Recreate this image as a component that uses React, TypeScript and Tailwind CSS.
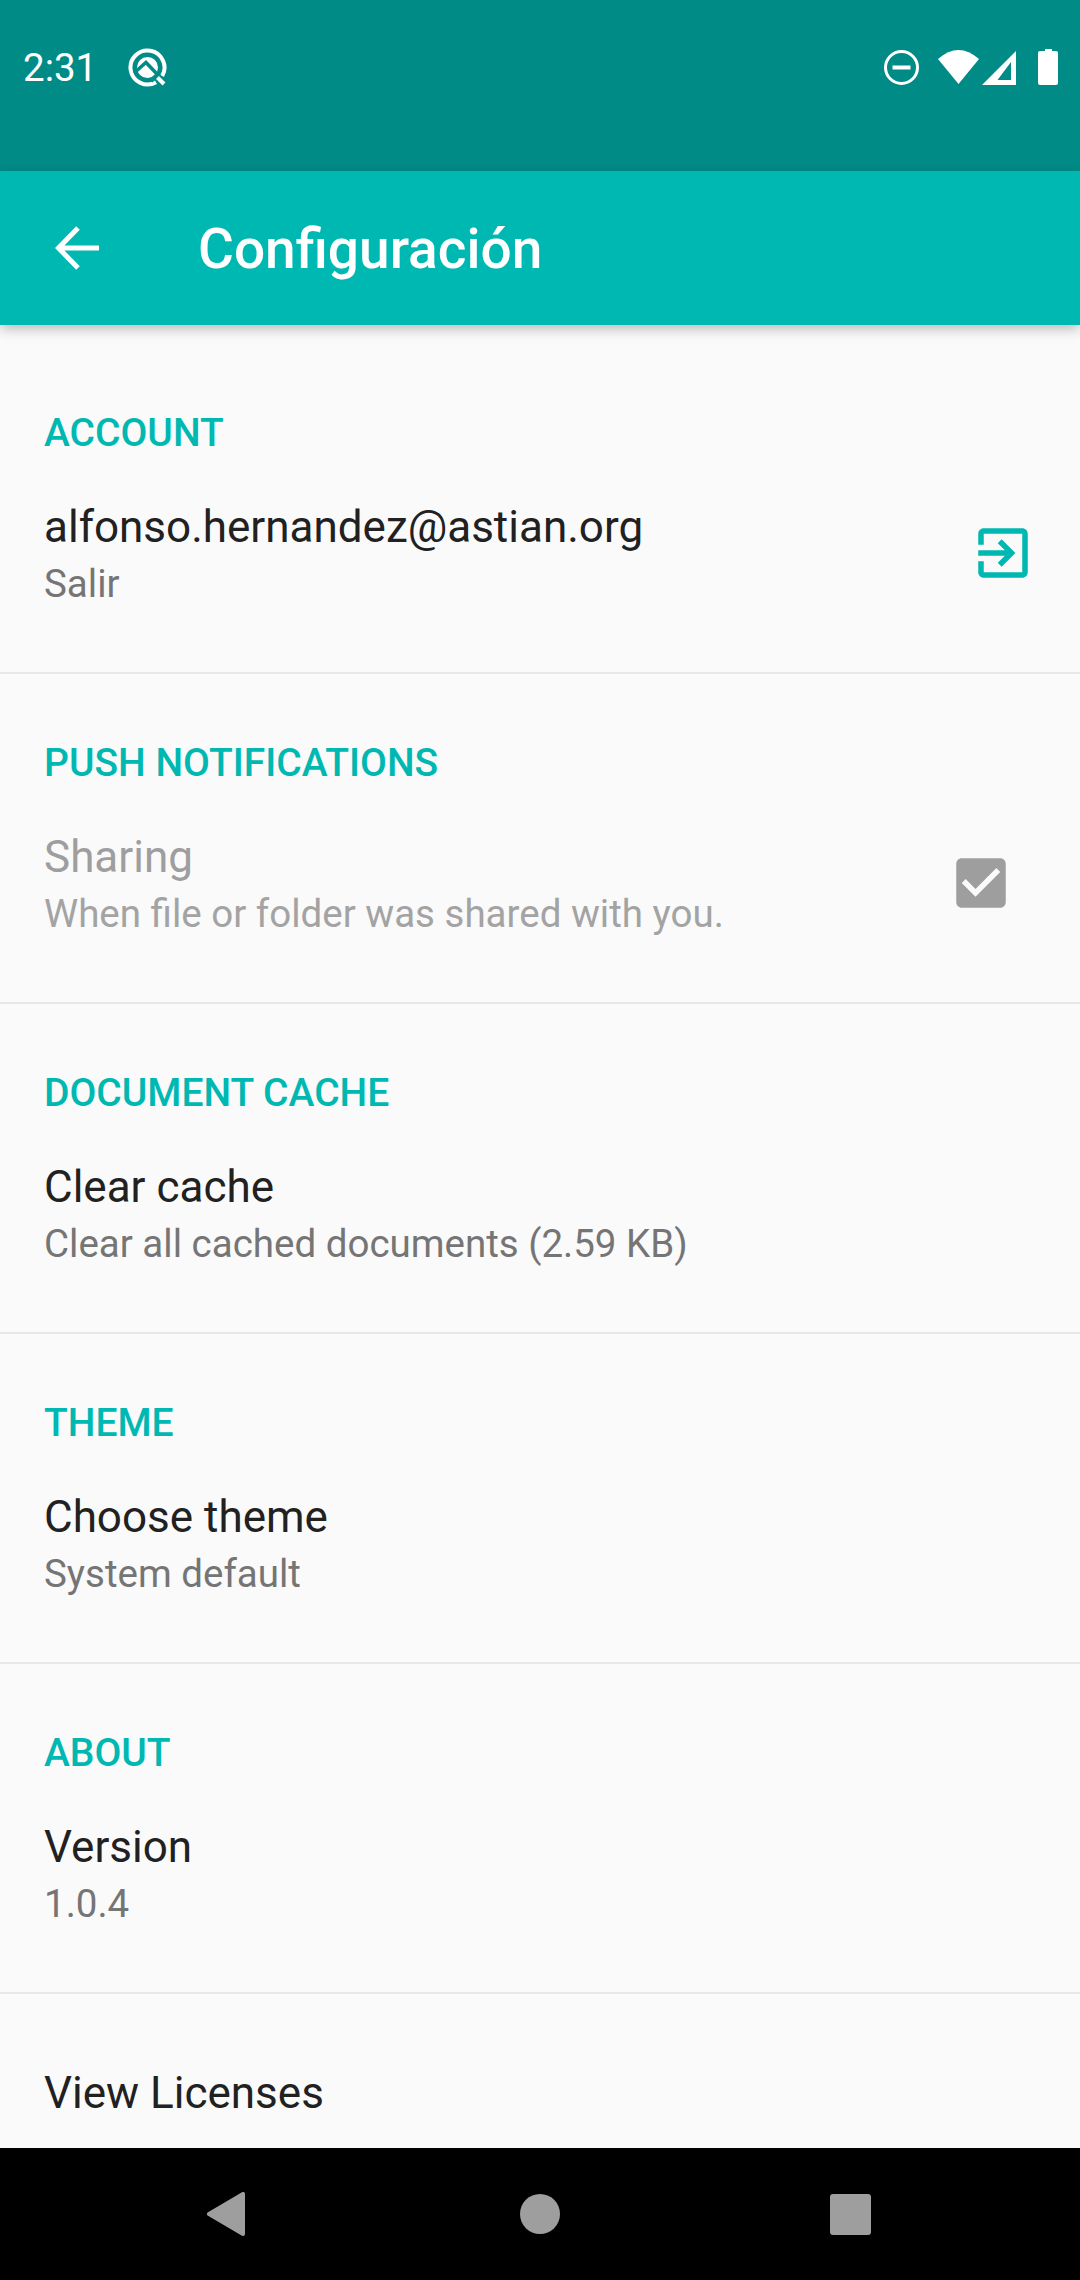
import React from 'react';

const TEAL = '#00b8b2';

const QIcon = () => (
  <svg width="40" height="40" viewBox="0 0 40 40" fill="none">
    <path d="M28 34.200A17 17 0 1 1 34.200 28" stroke="white" strokeWidth="4" />
    <path d="M27.500 27.500L36 36" stroke="white" strokeWidth="4" />
    <circle cx="19.500" cy="19.500" r="10.500" fill="white" />
    <path d="M6 25L18 14.500L30 27" stroke="#008b87" strokeWidth="3.500" />
    <path d="M23 33L31 25" stroke="#008b87" strokeWidth="4" />
  </svg>
);

const SettingRow = ({
  title,
  subtitle,
  disabled,
  action,
}: {
  title: string;
  subtitle?: string;
  disabled?: boolean;
  action?: React.ReactNode;
}) => (
  <div className="flex items-center justify-between">
    <div>
      <div className={`h-[57px] text-[44px] leading-[59px] ${disabled ? 'text-[#9e9e9e]' : 'text-[#212121]'}`}>
        {title}
      </div>
      {subtitle && (
        <div className={`h-[57px] text-[38.5px] leading-[57px] ${disabled ? 'text-[#a3a3a3]' : 'text-[#757575]'}`}>
          {subtitle}
        </div>
      )}
    </div>
    {action}
  </div>
);

const Section = ({ label, children }: { label: string; children: React.ReactNode }) => (
  <section className="h-[330px] border-b-[2px] border-[#e8e8e8] pl-[44px] pt-[67px]">
    <h2 className="mb-[43px] h-[44px] text-[39px] font-medium leading-[44px] text-[#00b8b2]">{label}</h2>
    {children}
  </section>
);

export default function App() {
  return (
    <div className="flex h-[2280px] w-[1080px] flex-col overflow-hidden bg-[#fafafa] font-['Roboto',sans-serif]">
      {/* Status bar */}
      <div className="flex h-[171px] shrink-0 items-start justify-between bg-[#008b87] pl-[23px] pr-[22px] pt-[48px] text-white">
        <div className="flex items-center gap-[31px]">
          <span className="text-[38.5px] leading-[40px]">2:31</span>
          <QIcon />
        </div>
        <svg width="175" height="38" viewBox="0 0 175 38" className="mt-[1px]">
          <circle cx="18.500" cy="18.500" r="16" fill="none" stroke="white" strokeWidth="3" />
          <rect x="9.500" y="16.500" width="18" height="4" fill="white" />
          <path d="M55 10Q75.500 -8 96 10L75.500 35Z" fill="white" />
          <path d="M133 2V36H99ZM128 13L114.500 31H128Z" fill="white" fillRule="evenodd" />
          <path d="M155 4Q155 2 157 2H162V0H169V2H173Q175 2 175 4V34Q175 36 173 36H157Q155 36 155 34Z" fill="white" />
        </svg>
      </div>

      {/* App bar */}
      <header className="relative z-10 flex h-[154px] shrink-0 items-center bg-[#00b8b2] pl-[55px] shadow-[0_4px_12px_rgba(0,0,0,0.25)]">
        <svg width="44" height="44" viewBox="0 0 44 44" fill="none" stroke="white" strokeWidth="5">
          <path d="M44 22H4M23 2L3.500 22L23 42" />
        </svg>
        <h1 className="ml-[99px] mt-[3px] text-[55px] font-medium text-white">Configuración</h1>
      </header>

      {/* Settings list */}
      <main className="flex-1 overflow-hidden pt-[19px]">
        <Section label="ACCOUNT">
          <SettingRow
            title="alfonso.hernandez@astian.org"
            subtitle="Salir"
            action={
              <svg width="66" height="66" viewBox="0 0 24 24" fill={TEAL} className="-mt-[4px] mr-[44px]">
                <path d="M10.09 15.59L11.5 17l5-5-5-5-1.41 1.41L12.67 11H3v2h9.67l-2.58 2.59zM19 3H5c-1.11 0-2 .9-2 2v4h2V5h14v14H5v-4H3v4c0 1.1.89 2 2 2h14c1.1 0 2-.9 2-2V5c0-1.1-.9-2-2-2z" />
              </svg>
            }
          />
        </Section>
        <Section label="PUSH NOTIFICATIONS">
          <SettingRow
            disabled
            title="Sharing"
            subtitle="When file or folder was shared with you."
            action={
              <svg width="66" height="66" viewBox="0 0 24 24" fill="#9e9e9e" className="-mt-[4px] mr-[66px]">
                <path d="M19 3H5c-1.11 0-2 .9-2 2v14c0 1.1.89 2 2 2h14c1.1 0 2-.9 2-2V5c0-1.11-.9-2-2-2zm-9 14l-5-5 1.41-1.41L10 14.17l7.59-7.59L19 8l-9 9z" />
              </svg>
            }
          />
        </Section>
        <Section label="DOCUMENT CACHE">
          <SettingRow title="Clear cache" subtitle="Clear all cached documents (2.59 KB)" />
        </Section>
        <Section label="THEME">
          <SettingRow title="Choose theme" subtitle="System default" />
        </Section>
        <Section label="ABOUT">
          <SettingRow title="Version" subtitle="1.0.4" />
        </Section>
        <div className="pl-[44px] pt-[70px]">
          <SettingRow title="View Licenses" />
        </div>
      </main>

      {/* Navigation bar */}
      <nav className="flex h-[132px] shrink-0 items-center justify-between bg-black pl-[207px] pr-[209px]">
        <svg width="38" height="44" viewBox="0 0 38 44" fill="#9e9e9e" stroke="#9e9e9e" strokeWidth="4" strokeLinejoin="round">
          <path d="M36 2V42L2 22Z" />
        </svg>
        <div className="ml-[5px] h-[40px] w-[40px] rounded-full bg-[#9e9e9e]" />
        <div className="h-[41px] w-[41px] rounded-[3px] bg-[#9e9e9e]" />
      </nav>
    </div>
  );
}
